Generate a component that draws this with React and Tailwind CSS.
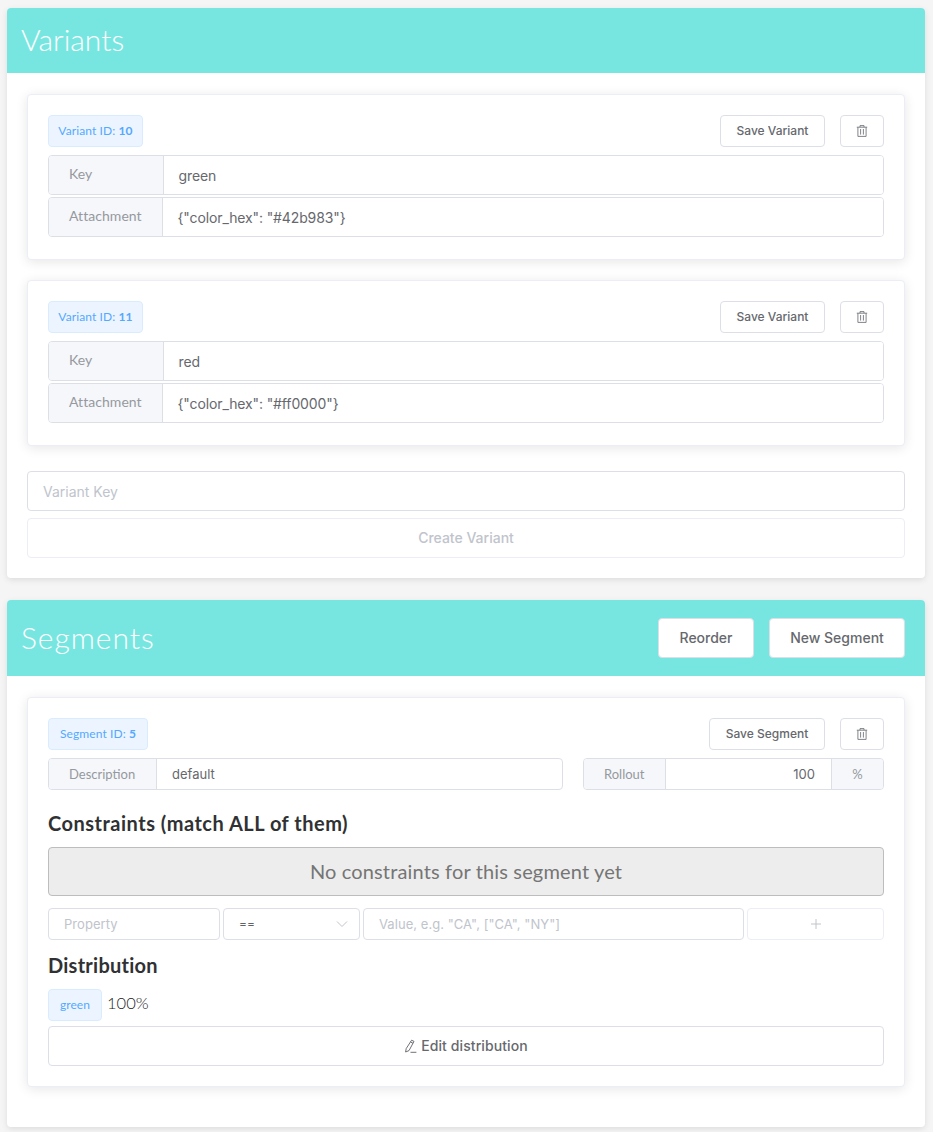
import React from "react";

const Trash = () => (
  <svg width="12" height="12" viewBox="0 0 12 12" fill="none" stroke="#73767c" strokeWidth="0.9" className="block">
    <path d="M0.8 2.2H11.2M4 2.2V0.6H8V2.2M1.9 2.2V11.4H10.1V2.2M4.6 4V9.6M7.4 4V9.6" />
  </svg>
);

const Pencil = () => (
  <svg width="13" height="14" viewBox="0 0 13 14" fill="none" stroke="#606266" strokeWidth="0.9" className="block">
    <path d="M7.6 1.2L10 2.4L5 11.6L1.6 13L2.2 9.6ZM6.6 3L9 4.3M6.5 13.3H12.4" />
  </svg>
);

const Tag = ({ children, w }) => (
  <span className={`inline-flex items-center justify-center h-8 rounded border border-[#d9ecff] bg-[#ecf5ff] text-[#54a8ff] text-xs tracking-[0.1px] whitespace-nowrap font-['Lato',sans-serif] ${w}`}>
    {children}
  </span>
);

const Btn = ({ children, className = "" }) => (
  <button className={`flex items-center justify-center rounded border border-[#dcdfe6] bg-white text-[#66686d] font-['Inter',sans-serif] font-medium ${className}`}>
    {children}
  </button>
);

const Label = ({ children, className = "" }) => (
  <div className={`flex items-center bg-[#f5f7fa] text-[#96999f] text-sm font-['Lato',sans-serif] shrink-0 ${className}`}>
    {children}
  </div>
);

const Field = ({ label, labelW, value, h = "h-10" }) => (
  <div className={`flex ${h} rounded border border-[#dcdfe6] overflow-hidden`}>
    <Label className={`${labelW} pl-5 border-r border-[#dcdfe6]`}>
      <span className="-mt-0.5 tracking-[0.05px]">{label}</span>
    </Label>
    <input
      readOnly
      defaultValue={value}
      className="flex-1 min-w-0 pl-[14.5px] pt-0.5 bg-white text-sm tracking-[-0.12px] text-[#66686d] font-['Inter',sans-serif] outline-none"
    />
  </div>
);

const TopRow = ({ tag, tagW, save, saveW }) => (
  <div className="flex justify-between">
    <Tag w={tagW}>{tag}</Tag>
    <div className="flex gap-[15px]">
      <Btn className={`h-8 text-xs ${saveW}`}>{save}</Btn>
      <Btn className="h-8 w-11">
        <Trash />
      </Btn>
    </div>
  </div>
);

const Variant = ({ id, keyName, attachment }) => (
  <div className="rounded border border-[#ebeef5] bg-white shadow-[0_2px_12px_0_rgba(0,0,0,0.1)] px-5 pt-5 pb-[22px]">
    <TopRow
      tag={
        <>
          Variant ID:&nbsp;<b className="font-bold">{id}</b>
        </>
      }
      tagW="w-[95px]"
      save="Save Variant"
      saveW="w-[105px]"
    />
    <div className="mt-2 flex flex-col gap-0.5">
      <Field label="Key" labelW="w-[115px]" value={keyName} />
      <Field label="Attachment" labelW="w-[114px]" value={attachment} />
    </div>
  </div>
);

const Header = ({ children, className = "" }) => (
  <div className={`flex items-center justify-between bg-[#78e6e0] rounded-t px-3.5 ${className}`}>
    {children}
  </div>
);

const Title = ({ children, className = "" }) => (
  <h2 className={`text-[30px] leading-none font-light text-white font-['Lato',sans-serif] ${className}`}>{children}</h2>
);

const Small = ({ className = "", ...p }) => (
  <input
    {...p}
    className={`h-8 min-w-0 rounded border border-[#dcdfe6] bg-white pl-[15px] text-[13px] tracking-[0.05px] text-[#606266] placeholder:text-[#c0c4cc] font-['Inter',sans-serif] outline-none ${className}`}
  />
);

export default function App() {
  return (
    <div className="min-h-[1132px] bg-[#f5f5f5] pt-2 pl-[7px] pr-2 font-['Inter',sans-serif]">
      <section className="rounded bg-white shadow-[0_2px_6px_0_rgba(0,0,0,0.1)]">
        <Header className="h-[65px]">
          <Title className="-mt-1">Variants</Title>
        </Header>
        <div className="px-5 pt-[21px] pb-5">
          <div className="flex flex-col gap-5">
            <Variant id="10" keyName="green" attachment={'{"color_hex": "#42b983"}'} />
            <Variant id="11" keyName="red" attachment={'{"color_hex": "#ff0000"}'} />
          </div>
          <input
            placeholder="Variant Key"
            className="mt-[25px] block w-full h-10 rounded border border-[#dcdfe6] pl-[15px] text-sm placeholder:text-[#c0c4cc] font-['Inter',sans-serif] outline-none"
          />
          <button className="mt-[7px] block w-full h-10 rounded border border-[#ebeef5] bg-white text-[#c0c4cc] text-sm font-medium font-['Inter',sans-serif]">
            Create Variant
          </button>
        </div>
      </section>

      <section className="mt-[22px] rounded bg-white shadow-[0_2px_6px_0_rgba(0,0,0,0.1)]">
        <Header className="h-[76px] pr-5">
          <Title className="-mt-0.5 tracking-[0.95px]">Segments</Title>
          <div className="flex gap-[15px]">
            <Btn className="h-10 w-[96px] text-sm">Reorder</Btn>
            <Btn className="h-10 w-[136px] text-sm">New Segment</Btn>
          </div>
        </Header>
        <div className="px-5 pt-[21px] pb-10">
          <div className="rounded border border-[#ebeef5] bg-white shadow-[0_2px_12px_0_rgba(0,0,0,0.1)] px-5 pt-5 pb-5">
            <TopRow
              tag={
                <>
                  Segment ID:&nbsp;<b className="font-bold">5</b>
                </>
              }
              tagW="w-[100px]"
              save="Save Segment"
              saveW="w-[116px]"
            />
            <div className="mt-2 flex gap-5">
              <div className="flex w-[515px] h-8 rounded border border-[#dcdfe6] overflow-hidden">
                <Label className="w-[108px] pl-5 border-r border-[#dcdfe6] text-[13px]">Description</Label>
                <input
                  readOnly
                  defaultValue="default"
                  className="flex-1 min-w-0 pl-[15px] pt-0.5 text-[13px] text-[#66686d] outline-none font-['Inter',sans-serif]"
                />
              </div>
              <div className="flex flex-1 h-8 rounded border border-[#dcdfe6] overflow-hidden">
                <Label className="w-[82px] pl-5 border-r border-[#dcdfe6] text-[13px]">Rollout</Label>
                <input
                  readOnly
                  defaultValue="100"
                  className="flex-1 min-w-0 pr-4 pt-0.5 text-right text-[13px] text-[#66686d] outline-none font-['Inter',sans-serif]"
                />
                <Label className="w-[52px] justify-center border-l border-[#dcdfe6] text-[13px]">%</Label>
              </div>
            </div>

            <h3 className="mt-[21px] text-[20px] leading-[24px] font-bold tracking-[0.5px] text-[#303133] font-['Lato',sans-serif]">
              Constraints (match ALL of them)
            </h3>
            <div className="mt-[12px] flex items-center justify-center h-[49px] pb-0.5 rounded-sm border border-[#bdbdbd] bg-[#ededed] text-[20px] tracking-[0.15px] text-[#757575] font-['Lato',sans-serif]">
              No constraints for this segment yet
            </div>

            <div className="mt-3 flex gap-[3px]">
              <Small placeholder="Property" className="w-[172px]" />
              <div className="flex items-center justify-between w-[137px] h-8 rounded border border-[#dcdfe6] pl-[15px] pr-[11px] text-xs text-[#606266]">
                <span>==</span>
                <svg width="12" height="12" viewBox="0 0 12 12" fill="none" stroke="#c0c4cc" strokeWidth="1" className="block">
                  <path d="M1 3.5L6 8.5L11 3.5" />
                </svg>
              </div>
              <Small placeholder={'Value, e.g. "CA", ["CA", "NY"]'} className="flex-1" />
              <button className="w-[137px] h-8 flex items-center justify-center rounded border border-[#ebeef5] bg-white">
                <svg width="10" height="10" viewBox="0 0 10 10" stroke="#c0c4cc" strokeWidth="1" className="block">
                  <path d="M5 0V10M0 5H10" />
                </svg>
              </button>
            </div>

            <h3 className="mt-3 text-[20px] leading-[26px] font-bold tracking-[0.25px] text-[#303133] font-['Lato',sans-serif]">Distribution</h3>
            <div className="mt-[11px] flex items-start">
              <Tag w="w-[54px]">green</Tag>
              <span className="ml-[5px] text-[16.5px] leading-[29px] font-light text-[#1a1b1d] font-['Lato',sans-serif]">100%</span>
            </div>
            <Btn className="mt-[5px] w-full h-10 text-sm gap-1 tracking-[0.1px]">
              <Pencil />
              Edit distribution
            </Btn>
          </div>
        </div>
      </section>
    </div>
  );
}
